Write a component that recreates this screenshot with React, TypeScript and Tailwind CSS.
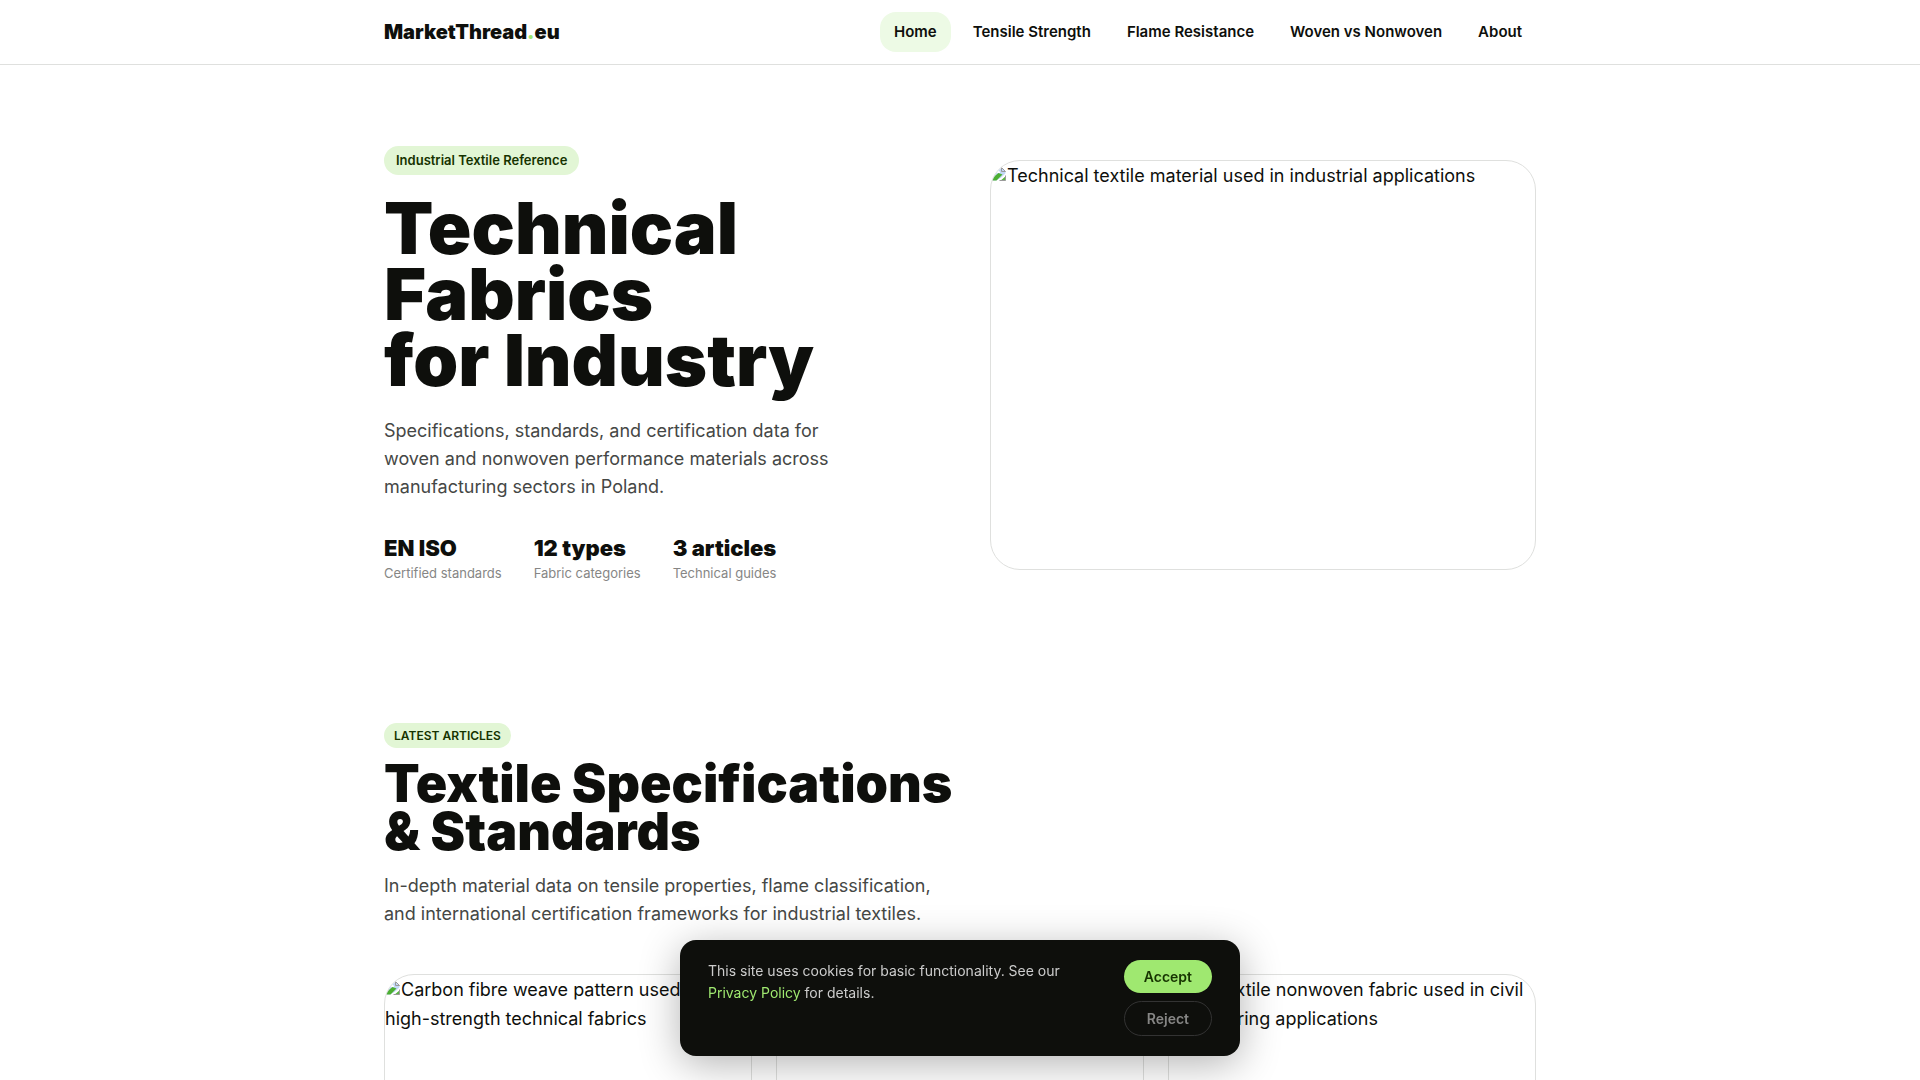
import React from 'react';

const navLinks = ['Home', 'Tensile Strength', 'Flame Resistance', 'Woven vs Nonwoven', 'About'];

const stats = [
  { value: 'EN ISO', label: 'Certified standards' },
  { value: '12 types', label: 'Fabric categories' },
  { value: '3 articles', label: 'Technical guides' },
];

const cards: React.ReactNode[] = [
  <>
    Carbon fibre weave pattern used in{' '}
    <span className="whitespace-nowrap">high-strength</span> technical fabrics
  </>,
  null,
  'Geotextile nonwoven fabric used in civil engineering applications',
];

function MissingImageIcon() {
  return (
    <svg viewBox="0 0 16 16" className="inline-block h-4 w-4 align-baseline" aria-hidden="true">
      <path d="M1.5 1.5h9l4 4v4L5 14.5H1.5z" fill="#c3d8f7" />
      <path d="M3 7a2 2 0 0 1 3-2 2 2 0 0 1 3 2z" fill="#fff" />
      <path d="M1.5 14.5V12l6-5 4 1.5-6 6z" fill="#4caf32" />
      <path d="M14.5 10v4.5h-6z" fill="#5bb544" />
      <path d="M15.5 6.5 6 15.5h2.5l7-6z" fill="#fff" />
      <path d="M1.5 14.5v-13h9l4 4M10.5 1.5v4h4M14.5 9.5v5h-6" fill="none" stroke="#9a9a9a" />
    </svg>
  );
}

function MissingImage({ children }: { children: React.ReactNode }) {
  return (
    <div>
      <MissingImageIcon />
      {children}
    </div>
  );
}

export default function App() {
  return (
    <div className="min-h-screen overflow-x-hidden bg-white font-['Inter',sans-serif] text-lg leading-[29px] text-[#0e0f0c]">
      <header className="border-b border-[#dfe0de]">
        <div className="mx-auto flex h-16 max-w-[1200px] items-center justify-between px-6">
          <a href="#" className="text-xl font-black">
            MarketThread<span className="text-[#9fe870]">.</span>eu
          </a>
          <nav className="flex gap-2">
            {navLinks.map((link, i) => (
              <a
                key={link}
                href="#"
                className={
                  i === 0
                    ? 'rounded-2xl bg-[#edfae5] px-3.5 py-2 text-[15px] leading-6 font-semibold'
                    : 'rounded-2xl px-3.5 py-2 text-[15px] leading-6 font-semibold'
                }
              >
                {link}
              </a>
            ))}
          </nav>
        </div>
      </header>

      <main>
        <section className="mx-auto grid max-w-[1200px] grid-cols-2 items-center gap-[60px] px-6 pt-[81px] pb-[70px]">
          <div>
            <p className="w-fit rounded-full bg-[#e2f6d5] px-3 py-1 text-[13px] leading-[21px] font-semibold text-[#163300]">
              Industrial Textile Reference
            </p>
            <h1 className="mt-5 text-[72px] leading-[66px] font-black">
              Technical
              <br />
              Fabrics
              <br />
              for Industry
            </h1>
            <p className="mt-6 max-w-[480px] leading-7 text-[#454745]">
              Specifications, standards, and certification data for woven and nonwoven performance
              materials across manufacturing sectors in Poland.
            </p>
            <dl className="mt-8 flex gap-8">
              {stats.map((s) => (
                <div key={s.value} className="flex flex-col-reverse">
                  <dt className="text-[13px] leading-[21px] text-[#868685]">{s.label}</dt>
                  <dd className="text-[22px] leading-[30px] font-black">{s.value}</dd>
                </div>
              ))}
            </dl>
          </div>
          <div className="aspect-[4/3] overflow-hidden rounded-[30px] border border-[#dfe0de]">
            <MissingImage>Technical textile material used in industrial applications</MissingImage>
          </div>
        </section>

        <section className="mx-auto max-w-[1200px] px-6 pt-[69px]">
          <p className="w-fit rounded-full bg-[#e2f6d5] px-2.5 py-[3px] text-xs leading-[19px] font-semibold text-[#163300] uppercase">
            Latest Articles
          </p>
          <h2 className="mt-3 text-[52px] leading-[48px] font-black">
            Textile Specifications
            <br />
            &amp; Standards
          </h2>
          <p className="mt-4 max-w-[560px] leading-7 text-[#454745]">
            In-depth material data on tensile properties, flame classification, and international
            certification frameworks for industrial textiles.
          </p>
          <div className="mt-[46px] grid grid-cols-3 gap-6">
            {cards.map((alt, i) => (
              <article
                key={i}
                className="aspect-[4/3] overflow-hidden rounded-[30px] border border-[#dfe0de]"
              >
                {alt && <MissingImage>{alt}</MissingImage>}
              </article>
            ))}
          </div>
        </section>
      </main>

      <aside
        aria-label="Cookies"
        className="fixed inset-x-0 bottom-6 mx-auto flex max-w-[560px] items-start justify-between gap-5 rounded-2xl bg-[#0e0f0c] px-7 py-5 shadow-[0_8px_40px_rgba(0,0,0,0.3)]"
      >
        <p className="max-w-[360px] text-sm leading-[22px] text-[#cccccc]">
          This site uses cookies for basic functionality. See our{' '}
          <a href="#" className="text-[#9fe870]">
            Privacy Policy
          </a>{' '}
          for details.
        </p>
        <div className="flex flex-col gap-2">
          <button className="rounded-full bg-[#9fe870] px-5 py-2 text-sm leading-[17px] font-semibold text-[#163300]">
            Accept
          </button>
          <button className="rounded-full border border-[#333333] px-5 py-2 text-sm leading-[17px] font-semibold text-[#868685]">
            Reject
          </button>
        </div>
      </aside>
    </div>
  );
}
